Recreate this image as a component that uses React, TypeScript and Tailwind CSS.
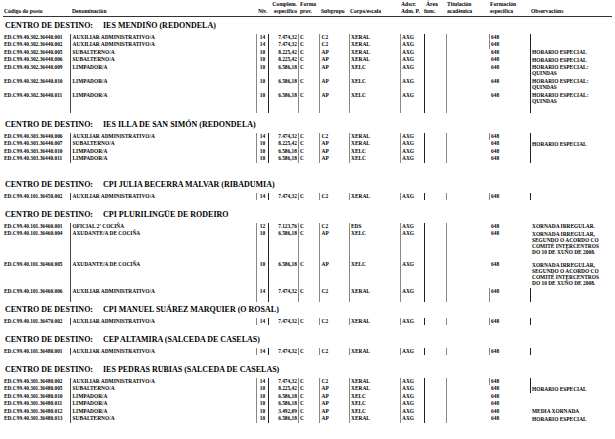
type Row = {
  code: string
  name: string
  niv: string
  comp: string
  sub: string
  corpo: string
  obs?: string[]
  h?: number
  b648?: boolean
  bObs?: boolean
}

type Section = { title: string; mt: number; rows: Row[] }

const AUX = 'AUXILIAR ADMINISTRATIVO/A'
const QUINDAS = ['HORARIO ESPECIAL:', 'QUINDAS']
const IRREG = ['XORNADA IRREGULAR,', 'SEGUNDO O ACORDO CO', 'COMITÉ INTERCENTROS', 'DO 10 DE XUÑO DE 2008.']

const SECTIONS: Section[] = [
  {
    title: 'IES MENDIÑO (REDONDELA)',
    mt: 1.5,
    rows: [
      { code: 'ED.C99.40.302.36440.001', name: AUX, niv: '14', comp: '7.474,32', sub: 'C2', corpo: 'XERAL', b648: true, bObs: true },
      { code: 'ED.C99.40.302.36440.002', name: AUX, niv: '14', comp: '7.474,32', sub: 'C2', corpo: 'XERAL', b648: true, bObs: true },
      { code: 'ED.C99.40.302.36440.005', name: 'SUBALTERNO/A', niv: '10', comp: '8.225,42', sub: 'AP', corpo: 'XERAL', obs: ['HORARIO ESPECIAL'], bObs: true },
      { code: 'ED.C99.40.302.36440.006', name: 'SUBALTERNO/A', niv: '10', comp: '8.225,42', sub: 'AP', corpo: 'XERAL', obs: ['HORARIO ESPECIAL'], bObs: true },
      { code: 'ED.C99.40.302.36440.009', name: 'LIMPADOR/A', niv: '10', comp: '6.586,18', sub: 'AP', corpo: 'XELC', obs: QUINDAS, h: 14, bObs: true },
      { code: 'ED.C99.40.302.36440.010', name: 'LIMPADOR/A', niv: '10', comp: '6.586,18', sub: 'AP', corpo: 'XELC', obs: QUINDAS, h: 14, bObs: true },
      { code: 'ED.C99.40.302.36440.011', name: 'LIMPADOR/A', niv: '10', comp: '6.586,18', sub: 'AP', corpo: 'XELC', obs: QUINDAS, h: 21, bObs: true },
    ],
  },
  {
    title: 'IES ILLA DE SAN SIMÓN (REDONDELA)',
    mt: 5,
    rows: [
      { code: 'ED.C99.40.303.36440.006', name: AUX, niv: '14', comp: '7.474,32', sub: 'C2', corpo: 'XERAL', b648: true, bObs: true },
      { code: 'ED.C99.40.303.36440.007', name: 'SUBALTERNO/A', niv: '10', comp: '8.225,42', sub: 'AP', corpo: 'XERAL', obs: ['HORARIO ESPECIAL'], bObs: true },
      { code: 'ED.C99.40.303.36440.010', name: 'LIMPADOR/A', niv: '10', comp: '6.586,18', sub: 'AP', corpo: 'XELC', bObs: true },
      { code: 'ED.C99.40.303.36440.011', name: 'LIMPADOR/A', niv: '10', comp: '6.586,18', sub: 'AP', corpo: 'XELC', bObs: true },
    ],
  },
  {
    title: 'CPI JULIA BECERRA MALVAR (RIBADUMIA)',
    mt: 15,
    rows: [
      { code: 'ED.C99.40.101.36450.002', name: AUX, niv: '14', comp: '7.474,32', sub: 'C2', corpo: 'XERAL', b648: true, bObs: true },
    ],
  },
  {
    title: 'CPI PLURILINGÜE DE RODEIRO',
    mt: 7.5,
    rows: [
      { code: 'ED.C99.40.101.36460.001', name: 'OFICIAL 2ª COCIÑA', niv: '12', comp: '7.123,76', sub: 'C2', corpo: 'EDS', obs: ['XORNADA IRREGULAR.'] },
      { code: 'ED.C99.40.101.36460.004', name: 'AXUDANTE/A DE COCIÑA', niv: '10', comp: '6.586,18', sub: 'AP', corpo: 'XELC', obs: IRREG, h: 31 },
      { code: 'ED.C99.40.101.36460.005', name: 'AXUDANTE/A DE COCIÑA', niv: '10', comp: '6.586,18', sub: 'AP', corpo: 'XELC', obs: IRREG, h: 27 },
      { code: 'ED.C99.40.101.36460.006', name: AUX, niv: '14', comp: '7.474,32', sub: 'C2', corpo: 'XERAL', h: 14, b648: true, bObs: true },
    ],
  },
  {
    title: 'CPI MANUEL SUÁREZ MARQUIER (O ROSAL)',
    mt: 0.5,
    rows: [
      { code: 'ED.C99.40.101.36470.002', name: AUX, niv: '14', comp: '7.474,32', sub: 'C2', corpo: 'XERAL', b648: true, bObs: true },
    ],
  },
  {
    title: 'CEP ALTAMIRA (SALCEDA DE CASELAS)',
    mt: 7.5,
    rows: [
      { code: 'ED.C99.40.101.36480.001', name: AUX, niv: '14', comp: '7.474,32', sub: 'C2', corpo: 'XERAL', b648: true, bObs: true },
    ],
  },
  {
    title: 'IES PEDRAS RUBIAS (SALCEDA DE CASELAS)',
    mt: 7.5,
    rows: [
      { code: 'ED.C99.40.301.36480.002', name: AUX, niv: '14', comp: '7.474,32', sub: 'C2', corpo: 'XERAL', b648: true, bObs: true },
      { code: 'ED.C99.40.301.36480.005', name: 'SUBALTERNO/A', niv: '10', comp: '8.225,42', sub: 'AP', corpo: 'XERAL', obs: ['HORARIO ESPECIAL'], bObs: true },
      { code: 'ED.C99.40.301.36480.010', name: 'LIMPADOR/A', niv: '10', comp: '6.586,18', sub: 'AP', corpo: 'XELC' },
      { code: 'ED.C99.40.301.36480.011', name: 'LIMPADOR/A', niv: '10', comp: '6.586,18', sub: 'AP', corpo: 'XELC' },
      { code: 'ED.C99.40.301.36480.012', name: 'LIMPADOR/A', niv: '10', comp: '3.492,09', sub: 'AP', corpo: 'XELC', obs: ['MEDIA XORNADA'] },
      { code: 'ED.C99.40.301.36480.013', name: 'SUBALTERNO/A', niv: '10', comp: '6.586,18', sub: 'AP', corpo: 'XERAL', obs: ['HORARIO ESPECIAL'] },
    ],
  },
]

function HeaderRow() {
  return (
    <div className="mx-[3px] flex h-[17px] items-end border-b border-[#333] text-[5.6px] font-bold leading-[7px] text-black">
      <div className="w-[67px] pb-[1px] pl-[1px]">Código do posto</div>
      <div className="w-[186px] pb-[1px] pl-[2px]">Denominación</div>
      <div className="w-[14px] pb-[1px] pl-[2px]">Niv.</div>
      <div className="w-[28px] pb-[1px] pr-[1px] text-right">
        <div>Complem.</div>
        <div>específico</div>
      </div>
      <div className="w-[21px] pb-[1px] pl-[2px]">
        <div>Forma</div>
        <div>prov.</div>
      </div>
      <div className="w-[30px] pb-[1px] pl-[2px]">Subgrupo</div>
      <div className="w-[51px] pb-[1px] pl-[1px]">Corpo/escala</div>
      <div className="w-[24px] pb-[1px] pl-[1px]">
        <div>Adscr.</div>
        <div>Adm. P.</div>
      </div>
      <div className="w-[22px] pb-[1px]">
        <div className="pl-[2px]">Área</div>
        <div>func.</div>
      </div>
      <div className="w-[43px] pb-[1px] pl-[1px]">
        <div>Titulación</div>
        <div>académica</div>
      </div>
      <div className="w-[41px] pb-[1px] pl-[1px]">
        <div>Formación</div>
        <div>específica</div>
      </div>
      <div className="w-[82px] pb-[1px] pl-[1px]">Observacións</div>
    </div>
  )
}

function DataRow({ r }: { r: Row }) {
  return (
    <div className="flex text-[5.4px] font-bold leading-[7.5px] text-black" style={{ height: r.h ?? 7.5 }}>
      <div className="w-[70px] whitespace-nowrap pl-[4px]">{r.code}</div>
      <div className="w-[186px] whitespace-nowrap border-l border-[#444] pl-[1.5px]">{r.name}</div>
      <div className="w-[12px] border-l border-[#888] text-center">{r.niv}</div>
      <div className="w-[30px] border-l border-[#222] pr-[1px] text-right">{r.comp}</div>
      <div className="w-[21px] border-l border-[#888] pl-[1px]">C</div>
      <div className="w-[30px] border-l border-[#888] pl-[1.5px]">{r.sub}</div>
      <div className="w-[51px] border-l border-[#888] pl-[1px]">{r.corpo}</div>
      <div className="w-[24px] border-l border-[#888] pl-[1px]">AXG</div>
      <div className="w-[22px] border-l border-[#222]" />
      <div className="w-[43px] border-l border-[#888]" />
      <div className={`w-[41px] pl-[1px] ${r.b648 ? 'border-l border-[#888]' : 'pl-[2px]'}`}>648</div>
      <div className={`w-[85px] pl-[1px] pt-[0.75px] leading-[6px] ${r.bObs ? 'border-l border-[#222]' : 'pl-[2px]'}`}>
        {(r.obs ?? []).map((l, i) => (
          <div key={i} className="whitespace-nowrap">
            {l}
          </div>
        ))}
      </div>
    </div>
  )
}

export default function App() {
  return (
    <div className="h-[439px] w-[615px] overflow-hidden bg-white [font-family:'Liberation_Serif','Times_New_Roman',serif]">
      <HeaderRow />
      {SECTIONS.map((s) => (
        <section key={s.title} style={{ marginTop: s.mt }}>
          <div className="flex h-[15px] items-center whitespace-nowrap pl-[5px] text-[8px] font-bold text-black">
            <span className="w-[98px] shrink-0">CENTRO DE DESTINO:</span>
            <span>{s.title}</span>
          </div>
          {s.rows.map((r) => (
            <DataRow key={r.code} r={r} />
          ))}
        </section>
      ))}
    </div>
  )
}
